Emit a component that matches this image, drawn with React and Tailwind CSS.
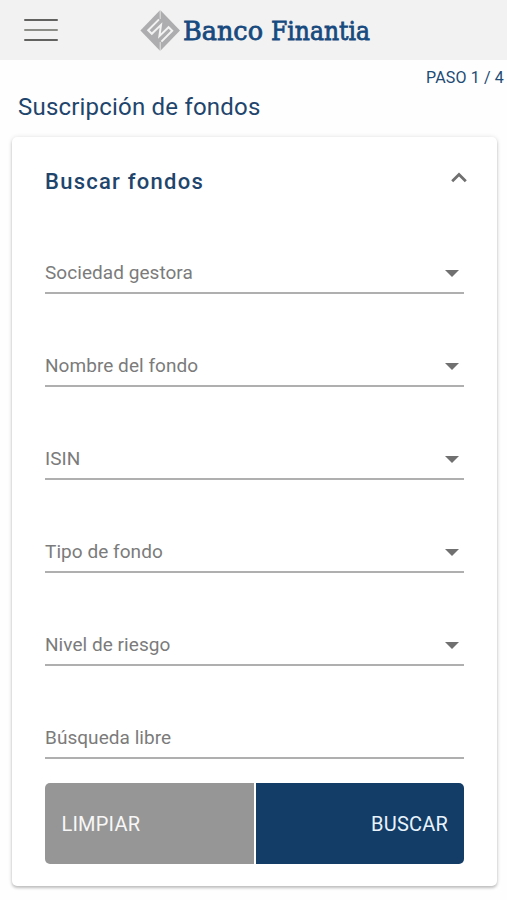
const fields = [
  "Sociedad gestora",
  "Nombre del fondo",
  "ISIN",
  "Tipo de fondo",
  "Nivel de riesgo",
];

function Brand() {
  return (
    <div className="ml-[82px] flex h-[60px] items-center">
      <svg className="h-[60px] w-[41px] shrink-0" viewBox="0 0 41 60" aria-hidden="true">
        <path d="M20.2 10 40 30.4 20.2 51 .4 30.4Z" fill="#adadaf" />
        <path
          d="M19 19.4 8.2 30.2l3.6 3.6 9.2-8.9-1.6 11.2 9.2-8.9 3.6 3.6-10.8 10.8"
          fill="none"
          stroke="#f2f2f2"
          strokeWidth="2"
        />
        <path d="M20.2 10v9M20.2 42v9" stroke="#f2f2f2" strokeWidth=".8" />
      </svg>
      <svg className="h-[60px] w-[200px] shrink-0" viewBox="0 0 200 60">
        <g fill="#174a7e" stroke="#174a7e" strokeWidth=".8" className="font-['DejaVu_Serif',serif] text-[26px]">
          <text x="2" y="40.2" textLength="80" lengthAdjust="spacingAndGlyphs">Banco</text>
          <text x="90" y="40.2" textLength="99" lengthAdjust="spacingAndGlyphs">Finantia</text>
        </g>
      </svg>
    </div>
  );
}

export default function App() {
  return (
    <div className="h-[900px] w-[507px] overflow-hidden bg-[#fefefe] font-[Roboto,sans-serif]">
      <header className="flex h-[60px] items-center bg-[#f2f2f2] pl-6">
        <button aria-label="Menú" className="flex w-[34px] shrink-0 flex-col gap-2">
          <span className="h-0.5 rounded bg-[#626260]" />
          <span className="h-0.5 rounded bg-[#8d8d88]" />
          <span className="h-0.5 rounded bg-[#626260]" />
        </button>
        <Brand />
      </header>
      <div className="flex h-[34px] justify-end pt-[6px] pr-[3px] text-[16px] leading-6 tracking-[0.15px] text-[#214a74]">
        PASO 1 / 4
      </div>
      <h1 className="-mt-[4px] h-[47px] pt-px pl-[18px] text-[24px] leading-8 tracking-[0.2px] text-[#1f456c]">
        Suscripción de fondos
      </h1>
      <main className="ml-3 h-[749px] w-[485px] rounded-[5px] bg-white px-[33px] shadow-[0_2px_3px_rgba(0,0,0,0.22),0_0_5px_rgba(0,0,0,0.1)]">
        <div className="flex h-[64px] items-start justify-between pt-[29px]">
          <h2 className="text-[22px] leading-8 font-medium tracking-[1.25px] text-[#1f456c]">Buscar fondos</h2>
          <svg className="mt-[5px] -mr-[3px] h-3 w-4" viewBox="0 0 16 12" fill="none" stroke="#707070" strokeWidth="2.8">
            <path d="M1.2 10.2 8 3.4l6.8 6.8" />
          </svg>
        </div>
        {fields.map((name) => (
          <div key={name} className="flex h-[93px] items-end justify-between border-b-2 border-[#afafaf] pb-[7px] text-[19px] leading-6 tracking-[0.05px] text-[#7b7b7b]">
            <span>{name}</span>
            <svg className="mr-[5px] mb-[8px] h-[7px] w-[14px]" viewBox="0 0 14 7" fill="#707070">
              <path d="M0 0h14L7 7Z" />
            </svg>
          </div>
        ))}
        <div className="flex h-[93px] items-end border-b-2 border-[#afafaf] pb-[7px] text-[19px] leading-6 tracking-[0.05px] text-[#7b7b7b]">
          Búsqueda libre
        </div>
        <div className="mt-[24px] flex h-[81px] gap-[2px] text-[20px] tracking-[0.2px]">
          <button className="flex w-[209px] items-center rounded-l-[5px] bg-[#969696] pl-[16.5px] text-[#f7f7f7]">LIMPIAR</button>
          <button className="flex w-[209px] items-center justify-end rounded-r-[5px] bg-[#133d67] pr-[16px] text-[#e8f3fd]">BUSCAR</button>
        </div>
      </main>
    </div>
  );
}
